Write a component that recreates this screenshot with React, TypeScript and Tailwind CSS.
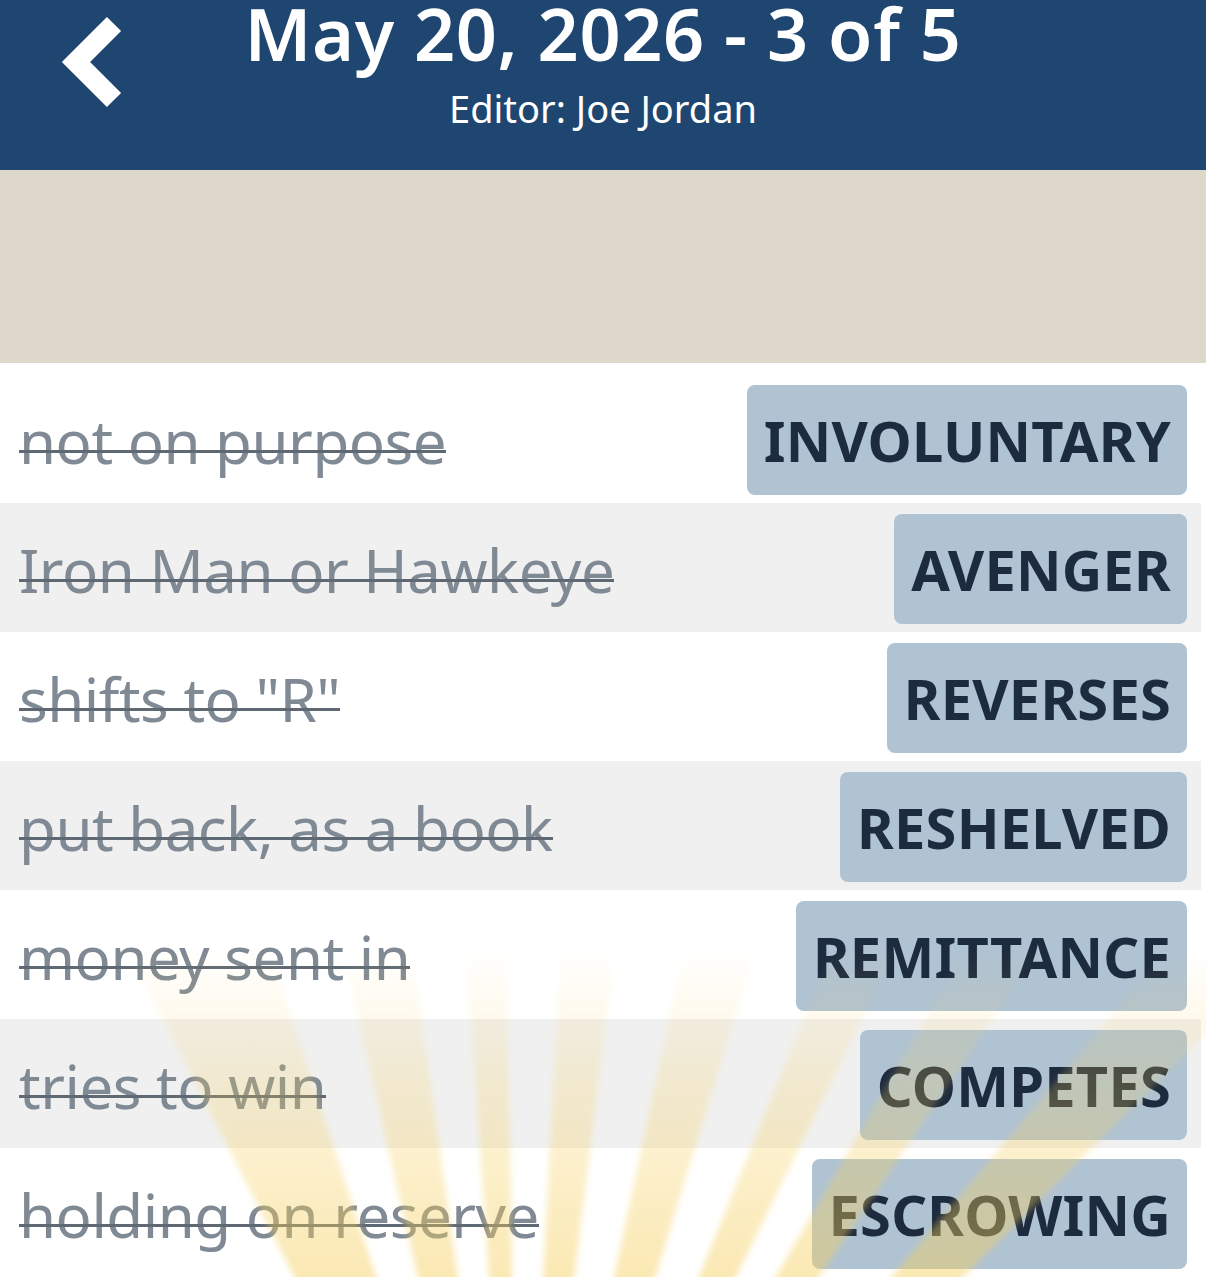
import React from 'react';

const clues = [
  { clue: 'not on purpose', answer: 'INVOLUNTARY' },
  { clue: 'Iron Man or Hawkeye', answer: 'AVENGER' },
  { clue: 'shifts to "R"', answer: 'REVERSES' },
  { clue: 'put back, as a book', answer: 'RESHELVED' },
  { clue: 'money sent in', answer: 'REMITTANCE' },
  { clue: 'tries to win', answer: 'COMPETES' },
  { clue: 'holding on reserve', answer: 'ESCROWING' },
];

// sunburst wedges, angles in degrees from vertical
const rays: [number, number][] = [
  [-27, -18],
  [-13, -8],
  [-4, -1],
  [3, 7],
  [12, 17],
  [22, 26],
  [30, 34],
  [40, 45],
];

const ORIGIN = { x: 520, y: 1720 };

const rayPoints = ([a, b]: [number, number]) => {
  const len = 1400;
  const p = (deg: number) => {
    const r = (deg * Math.PI) / 180;
    return `${ORIGIN.x + Math.sin(r) * len},${ORIGIN.y - Math.cos(r) * len}`;
  };
  return `${ORIGIN.x},${ORIGIN.y} ${p(a)} ${p(b)}`;
};

const BackChevron = () => (
  <svg width="70" height="100" viewBox="0 0 70 100" className="block">
    <polyline
      points="56,10 18,48 56,86"
      fill="none"
      stroke="white"
      strokeWidth="20"
      strokeLinejoin="miter"
      strokeLinecap="butt"
    />
  </svg>
);

const SunRays = () => (
  <svg
    className="pointer-events-none absolute inset-0"
    width="1206"
    height="1277"
    viewBox="0 0 1206 1277"
  >
    <defs>
      <linearGradient id="rayFade" gradientUnits="userSpaceOnUse" x1="0" y1="950" x2="0" y2="1277">
        <stop offset="0" stopColor="#f6cf5c" stopOpacity="0" />
        <stop offset="0.4" stopColor="#f6cf5c" stopOpacity="0.22" />
        <stop offset="1" stopColor="#f6cf5c" stopOpacity="0.46" />
      </linearGradient>
      <filter id="raySoft">
        <feGaussianBlur stdDeviation="3" />
      </filter>
    </defs>
    <g filter="url(#raySoft)">
      {rays.map((r, i) => (
        <polygon key={i} points={rayPoints(r)} fill="url(#rayFade)" />
      ))}
    </g>
  </svg>
);

export default function App() {
  return (
    <div className="relative w-[1206px] h-[1277px] overflow-hidden bg-white font-['Noto_Sans',sans-serif]">
      <header className="h-[170px] bg-[#1f4670] flex items-start">
        <div className="pl-[58px] pt-[14px] w-[200px] shrink-0">
          <BackChevron />
        </div>
        <div className="flex-1 flex flex-col items-center pr-[200px] pt-[1px] text-white">
          <h1 className="text-[72px] leading-[64px] font-semibold tracking-[0.6px] whitespace-nowrap">
            May 20, 2026 - 3 of 5
          </h1>
          <p className="text-[38px] leading-none mt-[24px] whitespace-nowrap">Editor: Joe Jordan</p>
        </div>
      </header>

      <div className="h-[193px] bg-[#ddd8cb]" />

      <ul className="pt-[11px]">
        {clues.map((c, i) => (
          <li
            key={c.answer}
            className={`h-[129px] mr-[5px] pl-[19px] pr-[14px] flex items-center justify-between ${
              i % 2 === 1 ? 'bg-[#f0f0f0]' : 'bg-white'
            }`}
          >
            <span className="relative text-[60px] leading-none text-[#808a94] tracking-[-0.5px] pt-[4px] after:absolute after:left-0 after:right-0 after:top-[43px] after:h-[3px] after:bg-[#5e6973]">
              {c.clue}
            </span>
            <span className="h-[110px] mt-[2px] pl-[17px] pr-[16px] rounded-[8px] bg-[#b0c3d3] flex items-center text-[56px] font-bold text-[#1d2b3e] tracking-[0.2px]">
              {c.answer}
            </span>
          </li>
        ))}
      </ul>

      <SunRays />
    </div>
  );
}
